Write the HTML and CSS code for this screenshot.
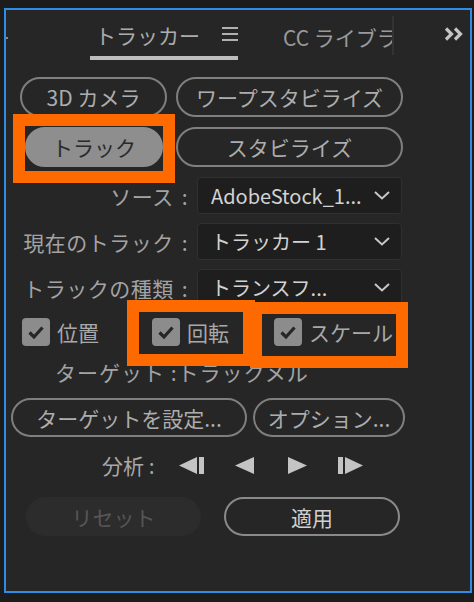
FILE: index.html
```html
<!DOCTYPE html>
<html lang="ja">
<head>
<meta charset="utf-8">
<link rel="stylesheet" href="styles.css">
</head>
<body>
<div class="panel">
  <div class="tabbar">
    <span class="edge"></span>
    <div class="tab-active">
      <span>トラッカー</span>
      <svg class="menu" width="16" height="14" viewBox="0 0 16 14"><rect x="0" y="0" width="16" height="2" fill="#b0b0b0"/><rect x="0" y="6" width="16" height="2" fill="#b0b0b0"/><rect x="0" y="12" width="16" height="2" fill="#b0b0b0"/></svg>
    </div>
    <div class="tab-other">CC ライブラリ</div>
    <span class="sep"></span>
    <svg class="more" width="20" height="14" viewBox="0 0 20 14"><path d="M2 1.5 L7.5 7 L2 12.5 M11 1.5 L16.5 7 L11 12.5" fill="none" stroke="#c4c4c4" stroke-width="3.2" stroke-linejoin="miter"/></svg>
  </div>

  <div class="btnrow1">
    <div class="pill b-3d">3D カメラ</div>
    <div class="pill b-warp">ワープスタビライズ</div>
  </div>
  <div class="btnrow2">
    <div class="pill selected b-track">トラック</div>
    <div class="pill b-stab">スタビライズ</div>
  </div>

  <div class="form">
    <div class="label">ソース<span class="colon">:</span></div>
    <div class="select"><span>AdobeStock_1...</span><svg class="chev" width="16" height="9" viewBox="0 0 16 9"><path d="M1 1 L8 7.5 L15 1" fill="none" stroke="#c8c8c8" stroke-width="2"/></svg></div>
    <div class="label">現在のトラック<span class="colon">:</span></div>
    <div class="select"><span>トラッカー 1</span><svg class="chev" width="16" height="9" viewBox="0 0 16 9"><path d="M1 1 L8 7.5 L15 1" fill="none" stroke="#c8c8c8" stroke-width="2"/></svg></div>
    <div class="label">トラックの種類<span class="colon">:</span></div>
    <div class="select"><span>トランスフ...</span><svg class="chev" width="16" height="9" viewBox="0 0 16 9"><path d="M1 1 L8 7.5 L15 1" fill="none" stroke="#c8c8c8" stroke-width="2"/></svg></div>
  </div>

  <div class="checks">
    <div class="check c1"><span class="box"><svg width="28" height="28" viewBox="0 0 28 28"><path d="M7.5 14.5 L12 19 L20.5 9.5" fill="none" stroke="#262626" stroke-width="3.2"/></svg></span><span>位置</span></div>
    <div class="check c2"><span class="box"><svg width="28" height="28" viewBox="0 0 28 28"><path d="M7.5 14.5 L12 19 L20.5 9.5" fill="none" stroke="#262626" stroke-width="3.2"/></svg></span><span>回転</span></div>
    <div class="check c3"><span class="box"><svg width="28" height="28" viewBox="0 0 28 28"><path d="M7.5 14.5 L12 19 L20.5 9.5" fill="none" stroke="#262626" stroke-width="3.2"/></svg></span><span>スケール</span></div>
  </div>

  <div class="target">ターゲット :トラックメル</div>

  <div class="btnrow3">
    <div class="pill b-target">ターゲットを設定...</div>
    <div class="pill b-opt">オプション...</div>
  </div>

  <div class="analyze">
    <span class="alabel">分析 :</span>
    <svg class="ic i1" width="25" height="17" viewBox="0 0 25 17"><path d="M0 8.5 L18 0 L18 17 Z" fill="#c4c4c4"/><rect x="20" y="0" width="5" height="17" fill="#c4c4c4"/></svg>
    <svg class="ic i2" width="19" height="17" viewBox="0 0 19 17"><path d="M0 8.5 L19 0 L19 17 Z" fill="#c4c4c4"/></svg>
    <svg class="ic i3" width="19" height="17" viewBox="0 0 19 17"><path d="M19 8.5 L0 0 L0 17 Z" fill="#c4c4c4"/></svg>
    <svg class="ic i4" width="25" height="17" viewBox="0 0 25 17"><rect x="0" y="0" width="5" height="17" fill="#c4c4c4"/><path d="M25 8.5 L7 0 L7 17 Z" fill="#c4c4c4"/></svg>
  </div>

  <div class="btnrow4">
    <div class="pill disabled b-reset">リセット</div>
    <div class="pill b-apply">適用</div>
  </div>

  <div class="hl hl1"></div>
  <div class="hl hl2"></div>
  <div class="hl hl3"></div>
</div>
</body>
</html>
```
FILE: styles.css
```css
body {
  margin: 0;
  background: #1c1c1c;
  font-family: "Noto Sans CJK JP", "Noto Sans", sans-serif;
}

.panel {
  position: relative;
  box-sizing: border-box;
  width: 468px;
  height: 585px;
  margin: 8px 0 0 4px;
  border: 2px solid #2f8de4;
  background: #262626;
  overflow: hidden;
}

/* tabs */
.tabbar {
  display: flex;
  align-items: stretch;
  height: 50px;
}
.edge {
  align-self: flex-start;
  width: 2px;
  height: 2px;
  margin-top: 27px;
  background: #8a8a8a;
}
.tab-active {
  box-sizing: border-box;
  margin-left: 82px;
  width: 148px;
  padding: 4px 0 0 5px;
  border-bottom: 4px solid #bdbdbd;
  display: flex;
  align-items: center;
  justify-content: space-between;
  color: #ababab;
  font-size: 21px;
}
.menu {
  margin-top: -2px;
}
.tab-other {
  margin-left: 45px;
  width: 109px;
  overflow: hidden;
  white-space: nowrap;
  display: flex;
  align-items: center;
  padding-top: 4px;
  color: #9a9a9a;
  font-size: 21px;
}
.sep {
  width: 2px;
  background: #333333;
  margin: 6px 0 5px;
}
.more {
  align-self: flex-start;
  margin: 17px 0 0 50px;
}

/* pills */
.pill {
  box-sizing: border-box;
  height: 40px;
  border: 2px solid #7f7f7f;
  border-radius: 20px;
  display: flex;
  align-items: center;
  justify-content: center;
  color: #adadad;
  font-size: 21px;
  white-space: nowrap;
}
.pill.selected {
  background: #8e8e8e;
  border-color: #8e8e8e;
  color: #2a2a2a;
}
.pill.disabled {
  background: #2c2c2c;
  border-color: #2c2c2c;
  color: #565656;
}

.btnrow1 {
  display: flex;
  gap: 9px;
  margin: 17px 0 0 14px;
}
.b-3d { width: 147px; }
.b-warp { width: 227px; }

.btnrow2 {
  display: flex;
  margin: 10px 0 0 19px;
}
.b-track { width: 138px; }
.b-stab { width: 227px; margin-left: 13px; }

/* form */
.form {
  display: grid;
  grid-template-columns: 182px 205px;
  grid-auto-rows: 37px;
  column-gap: 9px;
  row-gap: 9px;
  margin-top: 10px;
}
.label {
  display: flex;
  align-items: center;
  justify-content: flex-end;
  color: #a3a3a3;
  font-size: 21px;
  letter-spacing: 0.5px;
  white-space: nowrap;
}
.colon {
  margin-left: 8px;
}
.select {
  box-sizing: border-box;
  background: #1e1e1e;
  border: 1px solid #303030;
  border-radius: 4px;
  display: flex;
  align-items: center;
  justify-content: space-between;
  padding: 0 11px 0 13px;
  color: #d2d2d2;
  font-size: 20px;
  white-space: nowrap;
}

/* checkboxes */
.checks {
  display: flex;
  margin: 12px 0 0 16px;
  height: 28px;
}
.check {
  display: flex;
  align-items: center;
  gap: 7px;
  color: #a8a8a8;
  font-size: 21px;
}
.c1 { width: 130px; }
.c2 { width: 122px; }
.box {
  width: 28px;
  height: 28px;
  border-radius: 4px;
  background: #8c8c8c;
  display: block;
}
.box svg { display: block; }

.target {
  margin: 12px 0 0 49px;
  height: 28px;
  line-height: 28px;
  color: #a3a3a3;
  font-size: 21px;
  letter-spacing: 1px;
  white-space: nowrap;
}

.btnrow3 {
  display: flex;
  gap: 6px;
  margin: 12px 0 0 5px;
}
.b-target { width: 236px; height: 39px; }
.b-opt { width: 152px; height: 39px; }

/* analyze */
.analyze {
  display: flex;
  align-items: center;
  height: 24px;
  margin: 16px 0 0 96px;
}
.alabel {
  color: #a8a8a8;
  font-size: 21px;
  white-space: nowrap;
}
.i1 { margin-left: 24px; }
.i2 { margin-left: 31px; }
.i3 { margin-left: 34px; }
.i4 { margin-left: 31px; }

.btnrow4 {
  display: flex;
  gap: 23px;
  margin: 20px 0 0 20px;
}
.b-reset { width: 175px; height: 39px; }
.b-apply { width: 176px; height: 39px; border-color: #8a8a8a; color: #d0d0d0; }

/* orange annotation frames */
.hl {
  position: absolute;
  box-sizing: border-box;
  border: 12px solid #ff6a00;
}
.hl1 { left: 7px; top: 104px; width: 162px; height: 69px; }
.hl2 { left: 121px; top: 290px; width: 128px; height: 66px; }
.hl3 { left: 244px; top: 292px; width: 158px; height: 66px; }
```
